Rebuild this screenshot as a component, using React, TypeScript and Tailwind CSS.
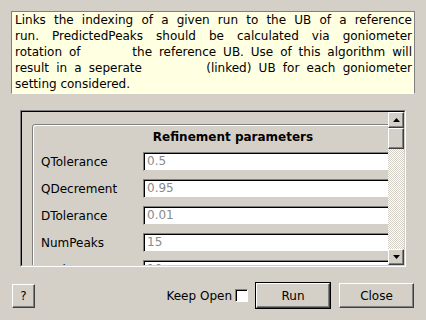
const rows = [
  { label: "QTolerance", value: "0.5" },
  { label: "QDecrement", value: "0.95" },
  { label: "DTolerance", value: "0.01" },
  { label: "NumPeaks", value: "15" },
  { label: "PeakIncrement", value: "10" },
];

const raised =
  "border border-t-white border-l-white border-r-[#404040] border-b-[#404040] shadow-[inset_-1px_-1px_0_#808080]";

const ArrowUp = () => (
  <svg width="7" height="4" viewBox="0 0 7 4">
    <polygon points="3.5,0 7,4 0,4" fill="#000" />
  </svg>
);

const ArrowDown = () => (
  <svg width="7" height="4" viewBox="0 0 7 4">
    <polygon points="0,0 7,0 3.5,4" fill="#000" />
  </svg>
);

const App = () => {
  return (
    <div className="w-[426px] h-[320px] bg-[#d4d0c8] font-['DejaVu_Sans',sans-serif] text-[12px] text-black overflow-hidden flex flex-col">
      {/* description */}
      <div className="mx-[11px] mt-[11px] h-[83px] bg-[#ffffe1] border border-t-[#808080] border-l-[#808080] border-r-[#808080] border-b-white pl-[3px] pr-[2px] leading-[16px]">
        <div className="text-justify [text-align-last:justify]">
          Links the indexing of a given run to the UB of a reference
        </div>
        <div className="text-justify [text-align-last:justify]">
          run. PredictedPeaks should be calculated via goniometer
        </div>
        <div className="text-justify [text-align-last:justify]">
          rotation of <span className="inline-block w-[38px]" /> the reference UB. Use of this algorithm will
        </div>
        <div className="text-justify [text-align-last:justify]">
          result in a seperate <span className="inline-block w-[50px]" /> (linked) UB for each goniometer
        </div>
        <div>setting considered.</div>
      </div>

      {/* scroll area */}
      <div className="ml-[20px] mt-[16px] w-[386px] h-[157px] border border-t-[#808080] border-l-[#808080] border-r-white border-b-white">
        <div className="w-full h-full border border-t-black border-l-black border-r-[#d4d0c8] border-b-[#d4d0c8] flex">
          <div className="flex-1 overflow-hidden bg-[#d4d0c8]">
            <div className="ml-[10px] mt-[12px] w-[402px] h-[200px] rounded-[3px] border border-[#808080] shadow-[inset_1px_1px_0_#fff]">
              <div className="h-[17px] mt-[4px] text-center font-bold leading-[17px]">
                Refinement parameters
              </div>
              <div className="flex flex-col gap-[8px] mt-[6px]">
                {rows.map((r) => (
                  <div key={r.label} className="flex items-center h-[19px]">
                    <div className="w-[110px] pl-[8px]">{r.label}</div>
                    <div className="w-[283px] h-[19px] bg-white border border-t-[#808080] border-l-[#808080] border-r-[#d4d0c8] border-b-[#d4d0c8] shadow-[inset_1px_1px_0_#000] pl-[3px] leading-[17px] text-[#8a8a8a]">
                      {r.value}
                    </div>
                  </div>
                ))}
              </div>
            </div>
          </div>
          {/* scrollbar */}
          <div className="w-[16px] flex flex-col">
            <div className={`h-[16px] bg-[#d4d0c8] flex items-center justify-center ${raised}`}>
              <ArrowUp />
            </div>
            <div className={`h-[21px] bg-[#d4d0c8] ${raised}`} />
            <div className="flex-1 bg-[repeating-conic-gradient(#d4d0c8_0_25%,#ffffff_0_50%)] bg-[length:2px_2px]" />
            <div className={`h-[16px] bg-[#d4d0c8] flex items-center justify-center ${raised}`}>
              <ArrowDown />
            </div>
          </div>
        </div>
      </div>

      {/* buttons */}
      <div className="mt-[15px] pl-[12px] pr-[12px] flex items-center h-[27px]">
        <button className={`w-[23px] h-[24px] bg-[#d4d0c8] ${raised} leading-none`}>?</button>
        <div className="flex-1" />
        <span>Keep Open</span>
        <span className="ml-[3px] w-[13px] h-[13px] bg-white border border-t-[#808080] border-l-[#808080] border-r-white border-b-white shadow-[inset_1px_1px_0_#000]" />
        <button className="ml-[7px] w-[76px] h-[27px] border border-black bg-[#d4d0c8]">
          <div className={`w-full h-full flex items-center justify-center ${raised}`}>Run</div>
        </button>
        <button className={`ml-[8px] w-[75px] h-[25px] bg-[#d4d0c8] ${raised}`}>Close</button>
      </div>
    </div>
  );
};

export default App;
